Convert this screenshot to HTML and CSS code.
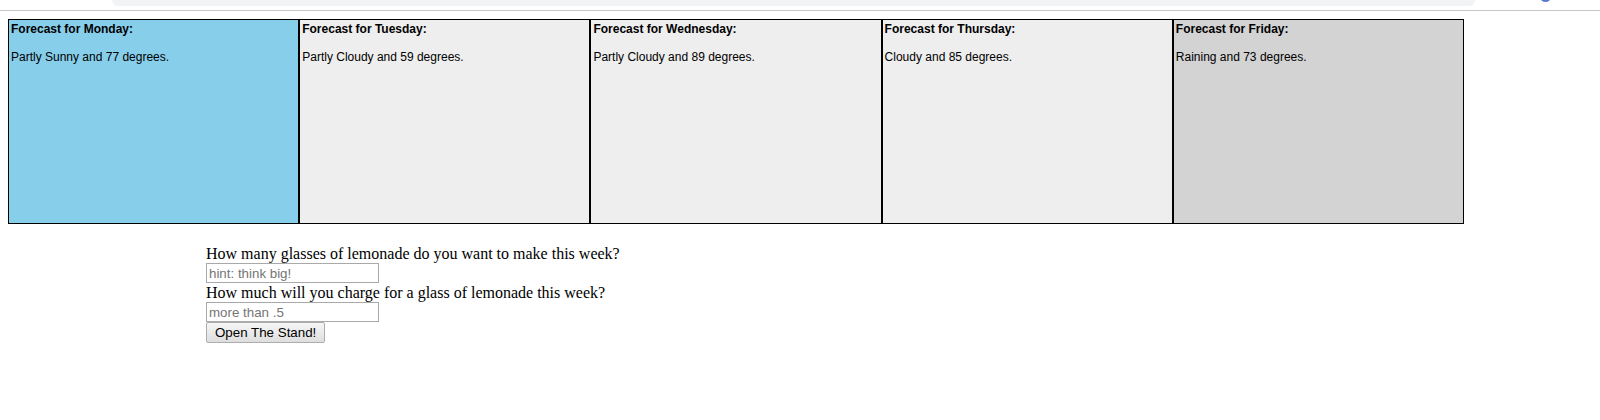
FILE: index.html
```html
<!DOCTYPE html>
<html>
<head>
<meta charset="utf-8">
<title>Lemonade Stand</title>
<link rel="stylesheet" href="styles.css">
</head>
<body>
<div class="chrome">
  <div class="urlbar"></div>
  <div class="avatar"></div>
</div>
<div class="forecast">
  <div class="day sunny">
    <div class="title">Forecast for Monday:</div>
    <div class="desc">Partly Sunny and 77 degrees.</div>
  </div>
  <div class="day cloudy">
    <div class="title">Forecast for Tuesday:</div>
    <div class="desc">Partly Cloudy and 59 degrees.</div>
  </div>
  <div class="day cloudy">
    <div class="title">Forecast for Wednesday:</div>
    <div class="desc">Partly Cloudy and 89 degrees.</div>
  </div>
  <div class="day cloudy">
    <div class="title">Forecast for Thursday:</div>
    <div class="desc">Cloudy and 85 degrees.</div>
  </div>
  <div class="day rainy">
    <div class="title">Forecast for Friday:</div>
    <div class="desc">Raining and 73 degrees.</div>
  </div>
</div>
<form class="stand">
  <div class="label">How many glasses of lemonade do you want to make this week?</div>
  <input class="field" type="text" placeholder="hint: think big!">
  <div class="label">How much will you charge for a glass of lemonade this week?</div>
  <input class="field" type="text" placeholder="more than .5">
  <button class="open" type="button">Open The Stand!</button>
</form>
</body>
</html>
```

FILE: styles.css
```css
html, body {
  margin: 0;
  padding: 0;
  background: #ffffff;
}

.chrome {
  display: flex;
  align-items: flex-start;
  height: 10px;
  border-bottom: 1px solid #c8c8c8;
  overflow: hidden;
}

.urlbar {
  margin-left: 112px;
  width: 1363px;
  height: 6px;
  background: #f1f3f4;
  border-radius: 0 0 14px 14px;
}

.avatar {
  margin-left: 65px;
  margin-top: -9px;
  width: 11px;
  height: 11px;
  border-radius: 50%;
  background: #5a78d2;
}

.forecast {
  display: flex;
  width: 1456px;
  height: 205px;
  margin: 8px 0 0 8px;
}

.day {
  flex: 1 1 0;
  box-sizing: border-box;
  border: 1px solid #000000;
  padding: 2px 2px;
  font-family: "Liberation Sans", Arial, sans-serif;
  font-size: 12px;
  line-height: 14px;
  color: #000000;
}

.sunny { background: #87ceeb; }
.cloudy { background: #eeeeee; }
.rainy { background: #d3d3d3; }

.title {
  font-weight: bold;
}

.desc {
  margin-top: 14px;
}

.stand {
  display: flex;
  flex-direction: column;
  align-items: flex-start;
  margin: 20px 0 0 206px;
}

.label {
  font-family: "Liberation Serif", "Times New Roman", serif;
  font-size: 16px;
  line-height: 19px;
  height: 19px;
  color: #000000;
}

.field {
  box-sizing: border-box;
  width: 173px;
  height: 20px;
  margin: 0;
  padding: 1px 2px;
  border: 1px solid #a9a9a9;
  font-family: "Liberation Sans", Arial, sans-serif;
  font-size: 13.333px;
  color: #000000;
  background: #ffffff;
}

.field::placeholder {
  color: #757575;
}

.open {
  box-sizing: border-box;
  height: 21px;
  margin: 0;
  padding: 1px 8px;
  border: 1px solid #adadad;
  border-radius: 2px;
  background: linear-gradient(#f6f6f6, #dedede);
  font-family: "Liberation Sans", Arial, sans-serif;
  font-size: 13.333px;
  color: #000000;
}
```
